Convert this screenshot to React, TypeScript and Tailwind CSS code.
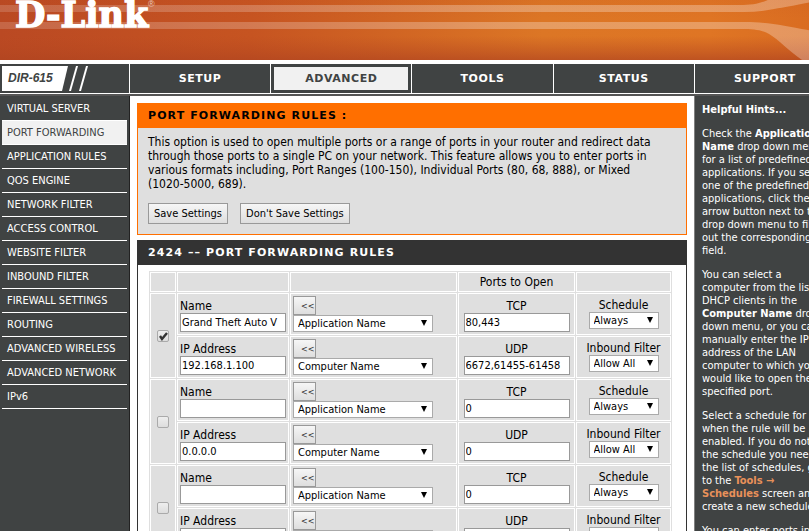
import { Fragment, type ReactNode } from "react";

const tabs = ["SETUP", "ADVANCED", "TOOLS", "STATUS", "SUPPORT"];

const menu = [
  "VIRTUAL SERVER",
  "PORT FORWARDING",
  "APPLICATION RULES",
  "QOS ENGINE",
  "NETWORK FILTER",
  "ACCESS CONTROL",
  "WEBSITE FILTER",
  "INBOUND FILTER",
  "FIREWALL SETTINGS",
  "ROUTING",
  "ADVANCED WIRELESS",
  "ADVANCED NETWORK",
  "IPv6",
];

const rules = [
  { enabled: true, name: "Grand Theft Auto V", ip: "192.168.1.100", tcp: "80,443", udp: "6672,61455-61458" },
  { enabled: false, name: "", ip: "0.0.0.0", tcp: "0", udp: "0" },
  { enabled: false, name: "", ip: "0.0.0.0", tcp: "0", udp: "0" },
];

const cell = "border border-white bg-[#dfdfdf] p-0";

function Banner() {
  return (
    <header className="relative h-15 overflow-hidden bg-[#c9561f]">
      <svg
        aria-hidden="true"
        className="absolute inset-0 h-full w-full"
        viewBox="0 0 836 60"
        preserveAspectRatio="none"
      >
        <defs>
          <linearGradient id="glow" x1="0" x2="1" y1="0" y2="0">
            <stop offset="0" stopColor="#ba4923" />
            <stop offset="0.3" stopColor="#c65421" />
            <stop offset="0.65" stopColor="#dc7625" />
            <stop offset="0.85" stopColor="#df7524" />
            <stop offset="1" stopColor="#d86a20" />
          </linearGradient>
          <linearGradient id="shade" x1="0" x2="0" y1="0" y2="1">
            <stop offset="0" stopColor="#b8481f" stopOpacity="0.1" />
            <stop offset="0.3" stopColor="#b8481f" stopOpacity="0" />
            <stop offset="0.6" stopColor="#b8481f" stopOpacity="0" />
            <stop offset="1" stopColor="#b04420" stopOpacity="0.7" />
          </linearGradient>
          <linearGradient id="stripe" x1="0" x2="1" y1="0" y2="0">
            <stop offset="0" stopColor="#fff" stopOpacity="0.16" />
            <stop offset="0.6" stopColor="#fff" stopOpacity="0.28" />
            <stop offset="1" stopColor="#fff" stopOpacity="0.28" />
          </linearGradient>
        </defs>
        <rect width="836" height="60" fill="url(#glow)" />
        <rect width="836" height="60" fill="url(#shade)" />
        <path
          d="M0 5H740C755 5 762 3 771 -1H836V-2C805 3 790 7 775 9C765 11 755 12 745 12H0Z"
          fill="url(#stripe)"
        />
        <path
          d="M0 22H745C770 22 785 26 809 30L836 34V80L803 60C790 51 780 40 770 34C763 30 755 29 742 29H0Z"
          fill="url(#stripe)"
        />
      </svg>
      <svg aria-label="D-Link" role="img" className="absolute left-3 top-0 h-8 w-40" viewBox="0 0 160 32">
        <text
          x="3"
          y="27"
          fill="#fff"
          stroke="#fff"
          strokeWidth="1.4"
          fontFamily="DejaVu Serif, serif"
          fontWeight="700"
          fontSize="35"
        >
          D-Link
        </text>
        <text x="136" y="7" fill="#fff" fillOpacity="0.7" fontFamily="Liberation Sans, sans-serif" fontSize="9">
          ®
        </text>
      </svg>
    </header>
  );
}

function ModelBadge() {
  return (
    <div className="relative h-[29px] w-[129px] shrink-0 bg-[#404343]">
      <svg aria-hidden="true" className="absolute left-0 top-0" width="128" height="29">
        <path d="M2 2H68L62 27H2Z" fill="#fff" />
        <path d="M76 2H78L71 27H69Z" fill="#fff" />
        <path d="M86 2H88L81 27H79Z" fill="#fff" />
      </svg>
      <span className="relative block pl-2 font-['Liberation_Sans',sans-serif] text-xs/7 font-bold italic text-[#404343]">
        DIR-615
      </span>
    </div>
  );
}

function TopNav() {
  return (
    <nav className="flex gap-px border-t-4 border-white bg-white">
      <ModelBadge />
      <div className="grid flex-1 grid-cols-5 gap-px">
        {tabs.map((tab) => (
          <a
            key={tab}
            href="#"
            className={
              "border-3 border-[#404343] text-center font-['DejaVu_Sans',sans-serif] text-[11px]/[23px] font-bold tracking-wider " +
              (tab === "ADVANCED" ? "bg-[#f1f1f1] text-[#404343]" : "bg-[#404343] text-white")
            }
          >
            {tab}
          </a>
        ))}
      </div>
    </nav>
  );
}

function SideMenu() {
  return (
    <aside className="w-[130px] shrink-0 border-r border-[#222] bg-[#404343] px-[2px] pt-px">
      <ul>
        {menu.map((item) => (
          <li key={item} className="border-b border-white">
            <a
              href="#"
              className={
                "block whitespace-nowrap pl-[5px] text-[11px]/[23px] " +
                (item === "PORT FORWARDING" ? "bg-[#f1f1f1] text-[#404343]" : "text-white")
              }
            >
              {item}
            </a>
          </li>
        ))}
      </ul>
    </aside>
  );
}

function PushButton({ children }: { children: ReactNode }) {
  return (
    <button
      type="button"
      className="h-[21px] border border-[#999] bg-linear-to-b from-[#f6f6f6] to-[#dedede] px-[5px] text-[11px]/4 text-black"
    >
      {children}
    </button>
  );
}

function Dropdown({ id, label, value, wide }: { id: string; label: string; value: string; wide?: boolean }) {
  return (
    <span className={"relative block " + (wide ? "w-[140px]" : "mx-auto w-[70px]")}>
      <select
        id={id}
        aria-label={label}
        className="block h-[17px] w-full appearance-none border border-[#aaa] bg-white pl-1 text-[11px]/[15px] text-black"
      >
        <option>{value}</option>
      </select>
      <svg
        aria-hidden="true"
        className="pointer-events-none absolute right-[6px] top-[5px]"
        width="6"
        height="6"
        viewBox="0 0 6 6"
      >
        <path d="M0 0H6L3 6Z" fill="#000" />
      </svg>
    </span>
  );
}

function Field({ id, label, value, centered }: { id: string; label: string; value: string; centered?: boolean }) {
  return (
    <div className={centered ? "text-center" : ""}>
      <label htmlFor={id} className="block text-xs/[14px]">
        {label}
      </label>
      <input
        id={id}
        type="text"
        defaultValue={value}
        className={
          "block h-[19px] w-[106px] border border-[#999] bg-white px-px text-[11px]/4 text-black " +
          (centered ? "mx-auto" : "")
        }
      />
    </div>
  );
}

function CopyCell({ id, label }: { id: string; label: string }) {
  return (
    <td className={cell + " pl-[2px] pt-[2px] align-top"}>
      <button
        type="button"
        className="block h-[19px] w-[23px] overflow-hidden border border-[#999] bg-linear-to-b from-[#f6f6f6] to-[#dedede] pl-[7px] text-left text-[9px]/4 text-[#333]"
      >
        &lt;&lt;
      </button>
      <Dropdown id={id} label={label} value={label} wide />
    </td>
  );
}

function RuleRows({ index, rule }: { index: number; rule: (typeof rules)[number] }) {
  return (
    <>
      <tr className="h-[42px]">
        <td rowSpan={2} className={cell}>
          <span className="relative mx-auto block size-3">
            <input
              type="checkbox"
              aria-label={`Rule ${index + 1}`}
              defaultChecked={rule.enabled}
              className="peer block size-3 appearance-none rounded-xs border border-[#aaa] bg-linear-to-b from-[#eee] to-[#ddd]"
            />
            <svg
              aria-hidden="true"
              className="pointer-events-none absolute left-0 top-0 hidden peer-checked:block"
              width="12"
              height="12"
              viewBox="0 0 12 12"
            >
              <path d="M3 6L5 9L10 3" fill="none" stroke="#333" strokeWidth="2.4" />
            </svg>
          </span>
        </td>
        <td className={cell + " pl-[2px] pt-[5px] align-top"}>
          <Field id={`name-${index}`} label="Name" value={rule.name} />
        </td>
        <CopyCell id={`app-${index}`} label="Application Name" />
        <td className={cell + " pt-[5px] align-top"}>
          <Field id={`tcp-${index}`} label="TCP" value={rule.tcp} centered />
        </td>
        <td className={cell + " pt-[4px] text-center align-top"}>
          <label htmlFor={`schedule-${index}`} className="block text-xs/[14px]">
            Schedule
          </label>
          <Dropdown id={`schedule-${index}`} label="Schedule" value="Always" />
        </td>
      </tr>
      <tr className="h-[42px]">
        <td className={cell + " pl-[2px] pt-[5px] align-top"}>
          <Field id={`ip-${index}`} label="IP Address" value={rule.ip} />
        </td>
        <CopyCell id={`computer-${index}`} label="Computer Name" />
        <td className={cell + " pt-[5px] align-top"}>
          <Field id={`udp-${index}`} label="UDP" value={rule.udp} centered />
        </td>
        <td className={cell + " pt-[4px] text-center align-top"}>
          <label htmlFor={`inbound-${index}`} className="block text-xs/[14px]">
            Inbound Filter
          </label>
          <Dropdown id={`inbound-${index}`} label="Inbound Filter" value="Allow All" />
        </td>
      </tr>
    </>
  );
}

function RulesTable() {
  return (
    <table className="w-full table-fixed border-separate border-spacing-px bg-[#dfdfdf]">
      <colgroup>
        <col className="w-[26px]" />
        <col className="w-[112px]" />
        <col className="w-[167px]" />
        <col className="w-[117px]" />
        <col />
      </colgroup>
      <thead>
        <tr className="h-5">
          <th className={cell} />
          <th className={cell} />
          <th className={cell} />
          <th className={cell + " text-xs/[18px] font-normal"}>Ports to Open</th>
          <th className={cell} />
        </tr>
      </thead>
      <tbody>
        {rules.map((rule, i) => (
          <RuleRows key={i} index={i} rule={rule} />
        ))}
      </tbody>
    </table>
  );
}

const hints: ReactNode[][] = [
  [
    <>Check the <b>Application</b></>,
    <><b>Name</b> drop down menu</>,
    "for a list of predefined",
    "applications. If you select",
    "one of the predefined",
    "applications, click the",
    "arrow button next to the",
    "drop down menu to fill",
    "out the corresponding",
    "field.",
  ],
  [
    "You can select a",
    "computer from the list of",
    "DHCP clients in the",
    <><b>Computer Name</b> drop</>,
    "down menu, or you can",
    "manually enter the IP",
    "address of the LAN",
    "computer to which you",
    "would like to open the",
    "specified port.",
  ],
  [
    "Select a schedule for",
    "when the rule will be",
    "enabled. If you do not see",
    "the schedule you need in",
    "the list of schedules, go",
    <>to the <a href="#" className="font-bold text-[#e8915a]">Tools →</a></>,
    <><a href="#" className="font-bold text-[#e8915a]">Schedules</a> screen and</>,
    "create a new schedule.",
  ],
  ["You can enter ports in"],
];

function Hints() {
  return (
    <aside className="w-[141px] shrink-0 overflow-hidden border-l border-[#808080] bg-[#404343] pl-[7px] pt-[7px] text-[11px]/[13px] text-white">
      <h2 className="mb-[11px] font-bold">Helpful Hints...</h2>
      {hints.map((lines, i) => (
        <p key={i} className="mb-[11px] whitespace-nowrap">
          {lines.map((line, j) => (
            <Fragment key={j}>
              {line}
              <br />
            </Fragment>
          ))}
        </p>
      ))}
    </aside>
  );
}

export default function App() {
  return (
    <div className="h-screen overflow-hidden bg-white font-['DejaVu_Sans_Condensed',sans-serif] text-black">
      <div className="min-w-[835px]">
        <Banner />
        <TopNav />
        <div className="mt-px flex border-t-2 border-[#555]">
          <SideMenu />
          <main className="min-w-0 flex-1 px-[7px] pt-[7px]">
            <section className="mb-[5px] border border-[#ff6f00] bg-[#dfdfdf]">
              <h1 className="bg-[#ff6f00] pl-[10px] font-['DejaVu_Sans',sans-serif] text-[11px]/6 font-bold tracking-widest">
                PORT FORWARDING RULES :
              </h1>
              <div className="px-[10px] pb-[10px] pt-[7px]">
                <p className="text-xs/[14px]">
                  This option is used to open multiple ports or a range of ports in your router and redirect data
                  <br />
                  through those ports to a single PC on your network. This feature allows you to enter ports in
                  <br />
                  various formats including, Port Ranges (100-150), Individual Ports (80, 68, 888), or Mixed
                  <br />
                  (1020-5000, 689).
                </p>
                <div className="mt-3 flex gap-3">
                  <PushButton>Save Settings</PushButton>
                  <PushButton>Don't Save Settings</PushButton>
                </div>
              </div>
            </section>
            <section className="border border-[#333]">
              <h2 className="bg-[#333] pl-[10px] font-['DejaVu_Sans',sans-serif] text-[11px]/6 font-bold tracking-widest text-white">
                2424 –– PORT FORWARDING RULES
              </h2>
              <div className="py-[6px] pl-[11px] pr-[14px]">
                <RulesTable />
              </div>
            </section>
          </main>
          <Hints />
        </div>
      </div>
    </div>
  );
}
